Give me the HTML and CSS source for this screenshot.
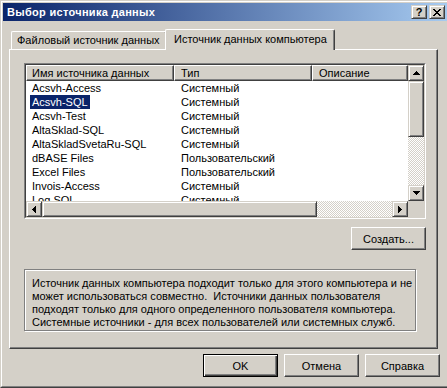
FILE: index.html
```html
<!DOCTYPE html>
<html lang="ru">
<head>
<meta charset="utf-8">
<title>Выбор источника данных</title>
<link rel="stylesheet" href="styles.css">
</head>
<body>
<div class="window">
  <div class="frame">
    <div class="titlebar">
      <span class="title">Выбор источника данных</span>
      <div class="cap-btn help">?</div>
      <div class="cap-btn close">
        <svg width="8" height="7" viewBox="0 0 8 7" shape-rendering="crispEdges"><g fill="#000"><rect x="0" y="0" width="2" height="1"/><rect x="6" y="0" width="2" height="1"/><rect x="1" y="1" width="2" height="1"/><rect x="5" y="1" width="2" height="1"/><rect x="2" y="2" width="4" height="1"/><rect x="3" y="3" width="2" height="1"/><rect x="2" y="4" width="4" height="1"/><rect x="1" y="5" width="2" height="1"/><rect x="5" y="5" width="2" height="1"/><rect x="0" y="6" width="2" height="1"/><rect x="6" y="6" width="2" height="1"/></g></svg>
      </div>
    </div>
    <div class="body">
      <div class="tabs">
        <div class="tab">Файловый источник данных</div>
        <div class="tab active">Источник данных компьютера</div>
      </div>
      <div class="panel">
        <div class="list">
          <div class="list-inner">
            <div class="view">
              <div class="header">
                <div class="hcol c1">Имя источника данных</div>
                <div class="hcol c2">Тип</div>
                <div class="hcol c3">Описание</div>
              </div>
              <div class="rows">
                <div class="row"><div class="n"><span>Acsvh-Access</span></div><div class="t">Системный</div></div>
                <div class="row selected"><div class="n"><span>Acsvh-SQL</span></div><div class="t">Системный</div></div>
                <div class="row"><div class="n"><span>Acsvh-Test</span></div><div class="t">Системный</div></div>
                <div class="row"><div class="n"><span>AltaSklad-SQL</span></div><div class="t">Системный</div></div>
                <div class="row"><div class="n"><span>AltaSkladSvetaRu-SQL</span></div><div class="t">Системный</div></div>
                <div class="row"><div class="n"><span>dBASE Files</span></div><div class="t">Пользовательский</div></div>
                <div class="row"><div class="n"><span>Excel Files</span></div><div class="t">Пользовательский</div></div>
                <div class="row"><div class="n"><span>Invois-Access</span></div><div class="t">Системный</div></div>
                <div class="row"><div class="n"><span>Log SQL</span></div><div class="t">Системный</div></div>
              </div>
            </div>
            <div class="vscroll">
              <div class="sb-btn"><svg width="7" height="4" viewBox="0 0 7 4" shape-rendering="crispEdges"><g fill="#000"><rect x="3" y="0" width="1" height="1"/><rect x="2" y="1" width="3" height="1"/><rect x="1" y="2" width="5" height="1"/><rect x="0" y="3" width="7" height="1"/></g></svg></div>
              <div class="sb-thumb vthumb"></div>
              <div class="track"></div>
              <div class="sb-btn"><svg width="7" height="4" viewBox="0 0 7 4" shape-rendering="crispEdges"><g fill="#000"><rect x="0" y="0" width="7" height="1"/><rect x="1" y="1" width="5" height="1"/><rect x="2" y="2" width="3" height="1"/><rect x="3" y="3" width="1" height="1"/></g></svg></div>
            </div>
            <div class="hscroll">
              <div class="sb-btn"><svg width="4" height="7" viewBox="0 0 4 7" shape-rendering="crispEdges"><g fill="#000"><rect x="0" y="3" width="1" height="1"/><rect x="1" y="2" width="1" height="3"/><rect x="2" y="1" width="1" height="5"/><rect x="3" y="0" width="1" height="7"/></g></svg></div>
              <div class="sb-thumb hthumb"></div>
              <div class="track"></div>
              <div class="sb-btn"><svg width="4" height="7" viewBox="0 0 4 7" shape-rendering="crispEdges"><g fill="#000"><rect x="0" y="0" width="1" height="7"/><rect x="1" y="1" width="1" height="5"/><rect x="2" y="2" width="1" height="3"/><rect x="3" y="3" width="1" height="1"/></g></svg></div>
            </div>
            <div class="corner"></div>
          </div>
        </div>
        <div class="actions">
          <div class="btn">Создать...</div>
        </div>
        <div class="info">Источник данных компьютера подходит только для этого компьютера и не<br>может использоваться совместно.&nbsp; Источники данных пользователя<br>подходят только для одного определенного пользователя компьютера.<br>Системные источники - для всех пользователей или системных служб.</div>
      </div>
      <div class="buttons">
        <div class="btn default">OK</div>
        <div class="btn">Отмена</div>
        <div class="btn">Справка</div>
      </div>
    </div>
  </div>
</div>
</body>
</html>
```
FILE: styles.css
```css
* { box-sizing: border-box; }

body {
  margin: 0;
  width: 447px;
  height: 388px;
  overflow: hidden;
  background: #D4D0C8;
  font-family: "Liberation Sans", Arial, sans-serif;
  font-size: 11px;
  color: #000;
}

.window {
  width: 450px;
  height: 388px;
  border: 1px solid;
  border-color: #D4D0C8 #404040 #404040 #D4D0C8;
}

.frame {
  height: 100%;
  border: 1px solid;
  border-color: #fff #808080 #808080 #fff;
  padding: 1px;
  display: flex;
  flex-direction: column;
}

.titlebar {
  flex: none;
  height: 18px;
  display: flex;
  align-items: center;
  padding: 0 2px;
  background: linear-gradient(to right, #0A246A, #A6CAF0);
}

.title {
  flex: 1;
  color: #fff;
  font-weight: bold;
  padding-left: 2px;
  line-height: 18px;
  letter-spacing: 0.3px;
  white-space: nowrap;
}

.cap-btn {
  width: 16px;
  height: 14px;
  display: flex;
  align-items: center;
  justify-content: center;
  background: #D4D0C8;
  border: 1px solid;
  border-color: #D4D0C8 #404040 #404040 #D4D0C8;
  box-shadow: inset 1px 1px #fff, inset -1px -1px #808080;
}

.help {
  margin-right: 2px;
  font-weight: bold;
  font-size: 11px;
  line-height: 11px;
  padding-top: 1px;
}

.body {
  flex: 1;
  padding: 8px 9px 0 6px;
}

.tabs {
  display: flex;
  align-items: flex-end;
  height: 21px;
  padding-left: 2px;
  margin-bottom: -1px;
  position: relative;
  z-index: 1;
}

.tab {
  height: 18px;
  width: 156px;
  margin-bottom: 1px;
  background: #D4D0C8;
  border-top: 1px solid #fff;
  border-left: 1px solid #fff;
  border-right: 1px solid #404040;
  border-top-left-radius: 2px;
  border-top-right-radius: 2px;
  box-shadow: inset -1px 0 #808080;
  padding: 2px 0 0 5px;
  line-height: 13px;
  white-space: nowrap;
}

.tab.active {
  height: 21px;
  width: 170px;
  margin-bottom: 0;
  margin-left: -2px;
  padding: 3px 0 0 8px;
}

.panel {
  height: 300px;
  border: 1px solid;
  border-color: #fff #404040 #404040 #fff;
  box-shadow: inset -1px -1px #808080;
  padding: 13px 0 0 14px;
}

.list {
  width: 402px;
  height: 156px;
  border: 1px solid;
  border-color: #808080 #fff #fff #808080;
}

.list-inner {
  height: 100%;
  border: 1px solid;
  border-color: #404040 #D4D0C8 #D4D0C8 #404040;
  background: #fff;
  display: grid;
  grid-template-columns: 382px 16px;
  grid-template-rows: 136px 16px;
}

.view {
  overflow: hidden;
  display: flex;
  flex-direction: column;
}

.header {
  display: flex;
  flex: none;
  height: 16px;
  background: #D4D0C8;
}

.hcol {
  border: 1px solid;
  border-color: #fff #404040 #404040 #fff;
  box-shadow: inset -1px -1px #808080;
  line-height: 14px;
  white-space: nowrap;
  overflow: hidden;
}

.hcol.c1 { width: 148px; padding-left: 5px; }
.hcol.c2 { width: 138px; padding-left: 6px; }
.hcol.c3 { flex: 1; padding-left: 6px; }

.rows {
  flex: 1;
  overflow: hidden;
}

.row {
  display: flex;
  height: 14px;
  line-height: 14px;
  white-space: nowrap;
}

.row .n {
  width: 148px;
  padding-left: 4px;
}

.row .n span {
  display: inline-block;
  padding: 0 2px;
}

.row .t { padding-left: 7px; }

.row.selected .n span {
  background: #0A246A;
  color: #fff;
}

.sb-btn {
  flex: none;
  width: 16px;
  height: 16px;
  display: flex;
  align-items: center;
  justify-content: center;
  background: #D4D0C8;
  border: 1px solid;
  border-color: #D4D0C8 #404040 #404040 #D4D0C8;
  box-shadow: inset 1px 1px #fff, inset -1px -1px #808080;
}

.sb-thumb {
  flex: none;
  background: #D4D0C8;
  border: 1px solid;
  border-color: #D4D0C8 #404040 #404040 #D4D0C8;
  box-shadow: inset 1px 1px #fff, inset -1px -1px #808080;
}

.vthumb { height: 56px; }
.hthumb { width: 275px; }

.track {
  flex: 1;
  background-image: repeating-conic-gradient(#fff 0 25%, #D4D0C8 0 50%);
  background-size: 2px 2px;
}

.vscroll {
  display: flex;
  flex-direction: column;
}

.hscroll {
  display: flex;
}

.corner { background: #D4D0C8; }

.actions {
  width: 402px;
  display: flex;
  justify-content: flex-end;
  margin-top: 8px;
}

.btn {
  width: 75px;
  height: 23px;
  display: flex;
  align-items: center;
  justify-content: center;
  background: #D4D0C8;
  border: 1px solid;
  border-color: #fff #404040 #404040 #fff;
  box-shadow: inset -1px -1px #808080;
}

.btn.default {
  border-color: #000;
  box-shadow: inset 1px 1px #fff, inset -1px -1px #404040, inset -2px -2px #808080;
}

.info {
  margin-top: 19px;
  width: 392px;
  height: 62px;
  border: 1px solid #808080;
  box-shadow: inset 1px 1px #fff, 1px 1px #fff;
  padding: 7px 0 0 7px;
  line-height: 13px;
  white-space: nowrap;
}

.buttons {
  display: flex;
  justify-content: flex-end;
  gap: 6px;
  margin-top: 5px;
  margin-right: -2px;
}
```
